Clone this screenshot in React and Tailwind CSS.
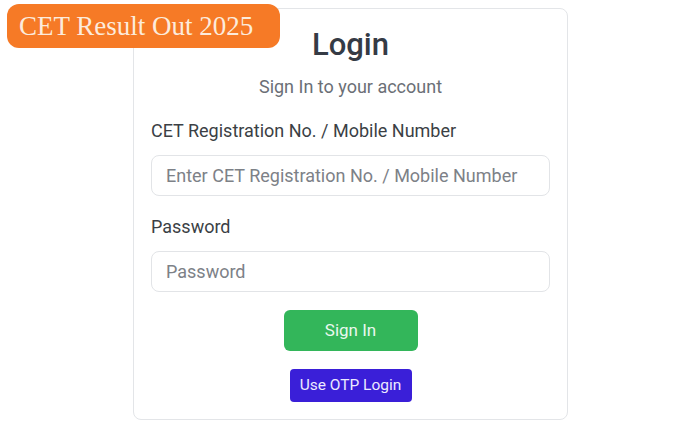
export default function App() {
  return (
    <div className="relative w-[681px] h-[426px] bg-white overflow-hidden" style={{ fontFamily: "Roboto, 'Liberation Sans', sans-serif" }}>
      {/* badge over the card */}
      <div
        className="absolute left-[7px] top-[4px] w-[273px] h-[44px] rounded-xl bg-[#f67a26] flex items-center pl-[12px] text-[27px] leading-none text-[#fcebdc]"
        style={{ fontFamily: "'Liberation Serif', 'DejaVu Serif', serif" }}
      >
        CET Result Out 2025
      </div>

      <div className="ml-[133px] mt-[8px] w-[435px] h-[412px] border border-[#e3e5e8] rounded-lg px-[17px] pt-[18px] flex flex-col">
        <h1 className="text-[31px] leading-[36px] font-medium text-[#353b45] text-center">Login</h1>
        <p className="mt-[10px] text-[18px] leading-[28px] text-[#6b6f76] text-center">Sign In to your account</p>

        <label className="mt-[18px] text-[18px] leading-[24px] text-[#3b3f45]">CET Registration No. / Mobile Number</label>
        <input
          type="text"
          placeholder="Enter CET Registration No. / Mobile Number"
          className="mt-[12px] h-[41px] w-full border border-[#e2e4e7] rounded-lg px-[14px] text-[18px] placeholder:text-[#7d8187] outline-none"
        />

        <label className="mt-[19px] text-[18px] leading-[24px] text-[#3b3f45]">Password</label>
        <input
          type="password"
          placeholder="Password"
          className="mt-[12px] h-[41px] w-full border border-[#e2e4e7] rounded-lg px-[14px] text-[18px] placeholder:text-[#7d8187] outline-none"
        />

        <button className="mt-[18px] self-center w-[134px] h-[41px] rounded-md bg-[#33b65a] text-[#e9f8ee] text-[17px]">
          Sign In
        </button>
        <button className="mt-[18px] self-center w-[122px] h-[33px] rounded-[4px] bg-[#3a1fd8] text-[#eceaff] text-[15.5px]">
          Use OTP Login
        </button>
      </div>
    </div>
  );
}
